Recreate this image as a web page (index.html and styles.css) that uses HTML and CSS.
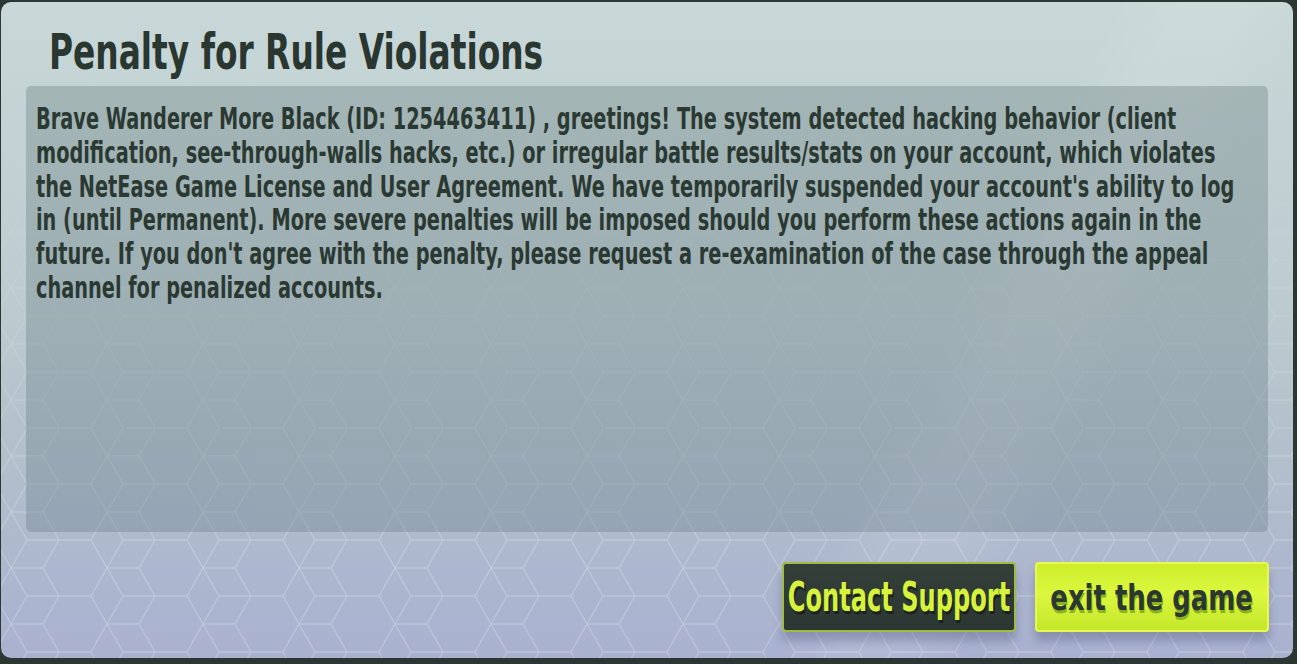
FILE: index.html
```html
<!DOCTYPE html>
<html lang="en">
<head>
<meta charset="utf-8">
<title>Penalty for Rule Violations</title>
<link rel="stylesheet" href="styles.css">
</head>
<body>
<div class="dialog">
  <h1 class="title"><span class="title-text">Penalty for Rule Violations</span></h1>
  <div class="panel">
    <p class="msg">Brave Wanderer More Black (ID: 1254463411) , greetings! The system detected hacking behavior (client<br>modification, see-through-walls hacks, etc.) or irregular battle results/stats on your account, which violates<br>the NetEase Game License and User Agreement. We have temporarily suspended your account's ability to log<br>in (until Permanent). More severe penalties will be imposed should you perform these actions again in the<br>future. If you don't agree with the penalty, please request a re-examination of the case through the appeal<br>channel for penalized accounts.</p>
  </div>
  <div class="actions">
    <button class="btn btn-dark" type="button"><span class="btn-text">Contact Support</span></button>
    <button class="btn btn-lime" type="button"><span class="btn-text">exit the game</span></button>
  </div>
</div>
</body>
</html>
```
FILE: styles.css
```css
html, body {
  margin: 0;
  padding: 0;
  height: 100%;
  overflow: hidden;
  background: #2c3632;
}

.dialog {
  box-sizing: border-box;
  width: 1292px;
  height: 656px;
  margin: 2px 0 0 1px;
  border-radius: 10px;
  padding: 0 25px;
  display: flex;
  flex-direction: column;
  overflow: hidden;
  font-family: "DejaVu Sans Condensed", "DejaVu Sans", sans-serif;
  background:
    linear-gradient(118deg, rgba(255,255,255,0) 0%, rgba(255,255,255,0) 68%, rgba(255,255,255,0.09) 72%, rgba(255,255,255,0.09) 76%, rgba(255,255,255,0) 80%, rgba(255,255,255,0) 100%),
    linear-gradient(180deg, #c8d7d7 0%, rgba(192,207,210,0.9) 30%, rgba(182,196,206,0.35) 62%, rgba(175,185,208,0) 85%),
    url("data:image/svg+xml,%3Csvg xmlns='http://www.w3.org/2000/svg' width='96' height='56' viewBox='0 0 96 56'%3E%3Cg fill='none' stroke='%23ffffff' stroke-opacity='0.22' stroke-width='1.3'%3E%3Cpath d='M0 28 L16 0 L48 0 L64 28 L48 56 L16 56 Z M64 28 L96 28 M16 0 L32 28 L16 56 M32 28 L64 28'/%3E%3C/g%3E%3C/svg%3E") -6px 6px / 96px 56px repeat,
    linear-gradient(180deg, #c8d7d7 0%, #bfcfd2 35%, #b2c0ca 65%, #a9b1d0 100%);
}

.title {
  margin: 19px 0 0 23px;
  height: 65px;
  font-size: 50px;
  line-height: 62px;
  font-weight: 700;
  color: #2a3731;
  white-space: nowrap;
}

.title-text {
  display: inline-block;
  transform: scaleX(0.73);
  transform-origin: 0 0;
}

.panel {
  height: 446px;
  border-radius: 5px;
  background: linear-gradient(180deg, rgba(118,138,138,0.42) 0%, rgba(112,132,145,0.40) 100%);
  padding: 0 10px;
  box-sizing: border-box;
}

.msg {
  display: inline-block;
  margin: 0;
  padding-top: 16px;
  font-size: 30px;
  line-height: 33.8px;
  font-weight: 700;
  color: #2b3933;
  white-space: nowrap;
  transform: scaleX(0.716);
  transform-origin: 0 0;
}

.actions {
  display: flex;
  justify-content: flex-end;
  gap: 19px;
  margin-top: 30px;
  margin-right: -1px;
}

.btn {
  width: 234px;
  height: 70px;
  border-radius: 4px;
  font-family: inherit;
  font-weight: 700;
  padding: 0;
  cursor: pointer;
  white-space: nowrap;
  display: flex;
  align-items: center;
  justify-content: center;
  overflow: visible;
}

.btn-text {
  display: inline-block;
}

.btn-dark {
  font-size: 40px;
  background: linear-gradient(180deg, #343f3a 0%, #2c3632 100%);
  border: 2px solid #9fbb42;
  color: #d6f23c;
  text-shadow: 2px 3px 0 #1a221e;
  box-shadow: 0 9px 10px rgba(70, 80, 120, 0.35);
}

.btn-dark .btn-text {
  transform: scaleX(0.67);
}

.btn-lime {
  font-size: 36px;
  background: linear-gradient(180deg, #cdee2c 0%, #dbf73e 45%, #c4e72a 100%);
  border: 2px solid #e8f84a;
  color: #2b3731;
  text-shadow: 1px 3px 0 #8cb21e;
  box-shadow: 0 9px 10px rgba(70, 80, 120, 0.35);
}

.btn-lime .btn-text {
  transform: scaleX(0.80);
}
```
